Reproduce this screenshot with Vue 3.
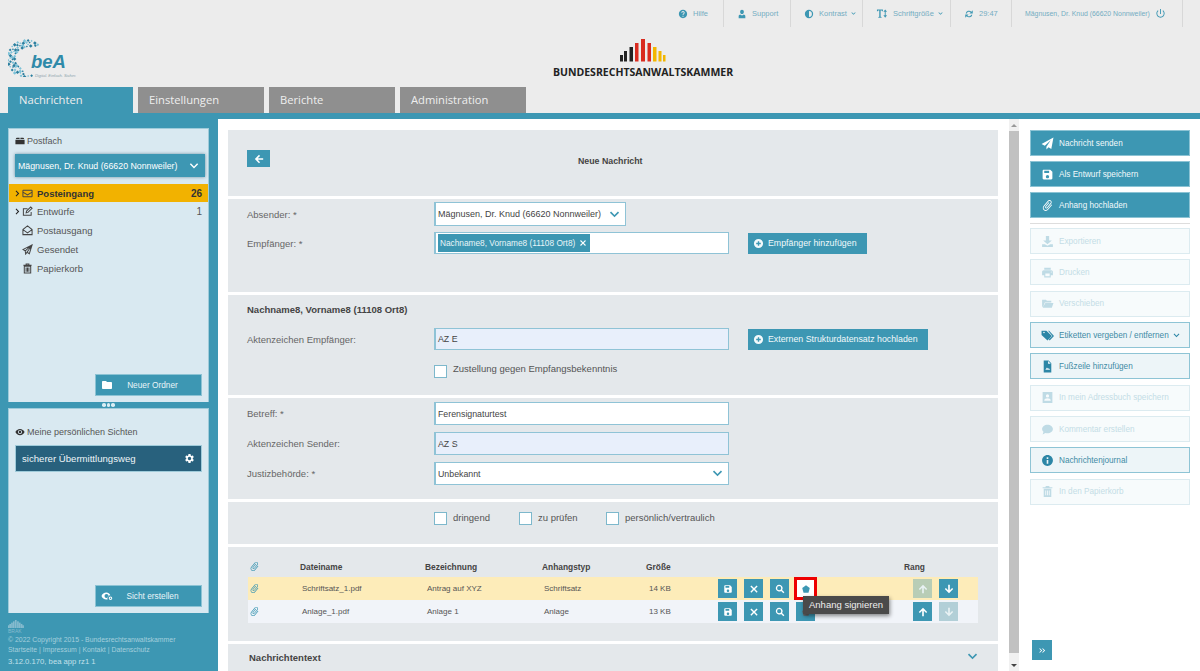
<script setup>
import { h } from 'vue'

const paths = {
  help: 'M12 2C6.48 2 2 6.48 2 12s4.48 10 10 10 10-4.48 10-10S17.52 2 12 2zm1 17h-2v-2h2v2zm2.07-7.75l-.9.92C13.45 12.9 13 13.5 13 15h-2v-.5c0-1.1.45-2.1 1.17-2.83l1.24-1.26c.37-.36.59-.86.59-1.41 0-1.1-.9-2-2-2s-2 .9-2 2H8c0-2.21 1.79-4 4-4s4 1.79 4 4c0 .88-.36 1.68-.93 2.25z',
  person: 'M12 12c2.6 0 4.5-2.2 4.5-5S14.600 2 12 2 7.500 4.200 7.500 7s1.900 5 4.500 5zM4 22v-5c0-2.500 2-3.500 4-4l2 2h4l2-2c2 .5 4 1.500 4 4v5z',
  contrast: 'M12 2a10 10 0 1 0 0 20 10 10 0 0 0 0-20zm0 17V5a7 7 0 0 1 0 14z',
  dot: 'M12 3 21 9.500 18 21H6L3 9.500z',
  refresh: 'M17.650 6.350A8 8 0 0 0 4.100 10.500h2.700a5.500 5.500 0 0 1 9.100-2.400L13 11h8V3zM6.350 17.650A8 8 0 0 0 19.900 13.500h-2.700a5.500 5.500 0 0 1-9.100 2.400L11 13H3v8z',
  power: 'M13 2h-2v11h2V2zm4.830 3.170l-1.420 1.420C17.990 7.860 19 9.810 19 12c0 3.870-3.130 7-7 7s-7-3.130-7-7c0-2.190 1.010-4.140 2.580-5.420L6.170 5.170C4.230 6.820 3 9.260 3 12c0 4.970 4.030 9 9 9s9-4.030 9-9c0-2.740-1.230-5.180-3.170-6.830z',
  send: 'M23 1 1 13l6 3 11-10-8 12v5l4-4 5 3z',
  save: 'M17 3H5c-1.110 0-2 .9-2 2v14c0 1.100.89 2 2 2h14c1.100 0 2-.9 2-2V7l-4-4zm-5 16c-1.660 0-3-1.340-3-3s1.340-3 3-3 3 1.340 3 3-1.340 3-3 3zm3-10H6V5h9v4z',
  clip: 'M16.500 6v11.500c0 2.210-1.790 4-4 4s-4-1.790-4-4V5c0-1.380 1.120-2.500 2.500-2.500s2.500 1.120 2.500 2.500v10.500c0 .55-.45 1-1 1s-1-.45-1-1V6H10v9.500c0 1.380 1.120 2.500 2.500 2.500s2.500-1.120 2.500-2.500V5c0-2.210-1.790-4-4-4S7 2.790 7 5v12.500c0 3.040 2.460 5.500 5.500 5.500s5.500-2.460 5.500-5.500V6h-1.500z',
  download: 'M9 2h6v8h5l-8 7-8-7h5zM2 17h5l5 3 5-3h5v5H2z',
  print: 'M19 8H5c-1.660 0-3 1.340-3 3v6h4v4h12v-4h4v-6c0-1.660-1.340-3-3-3zm-3 11H8v-5h8v5zm3-7c-.55 0-1-.45-1-1s.45-1 1-1 1 .45 1 1-.45 1-1 1zm-1-9H6v4h12V3z',
  folderOpen: 'M2 5h7l2 2h8v3H7l-3 8H2zM8 11h15l-3 9H3z',
  folder: 'M10 4H4c-1.100 0-1.990.9-1.990 2L2 18c0 1.100.9 2 2 2h16c1.100 0 2-.9 2-2V8c0-1.100-.9-2-2-2h-8l-2-2z',
  tags: 'M1 3h9l10 10-8 8L1 11zM5.500 5A1.500 1.500 0 1 0 5.500 8 1.500 1.500 0 0 0 5.500 5zM13 3h2l9 10-8 8-1.500-1.500L21 13z',
  fileImg: 'M5 1h9l5 5v17H5zM13 2v5h5zM8 18l3-4 2 2 1.500-1 2.500 3z',
  contact: 'M3 2h18v20H3zM12 6a3 3 0 1 0 0 6 3 3 0 0 0 0-6zM6 18h12c0-3-3-4.500-6-4.500S6 15 6 18z',
  comment: 'M12 3C6.500 3 2 6.600 2 11c0 2 1 3.900 2.600 5.300L3 21l5.200-2.500c1.200.3 2.500.5 3.800.5 5.500 0 10-3.600 10-8s-4.500-8-10-8z',
  info: 'M12 2C6.480 2 2 6.480 2 12s4.480 10 10 10 10-4.480 10-10S17.520 2 12 2zm1.500 16h-3v-7h3v7zm0-9h-3V6h3v3z',
  trash: 'M5 7h14v15H5zM8 10v9h1.500v-9zM11.250 10v9h1.500v-9zM14.500 10v9H16v-9zM3 4h5l1-2h6l1 2h5v2H3z',
  eye: 'M12 4.500C7 4.500 2.730 7.610 1 12c1.730 4.390 6 7.500 11 7.500s9.270-3.110 11-7.500c-1.730-4.390-6-7.500-11-7.500zM12 17c-2.760 0-5-2.240-5-5s2.240-5 5-5 5 2.240 5 5-2.240 5-5 5zm0-8c-1.660 0-3 1.340-3 3s1.340 3 3 3 3-1.340 3-3-1.340-3-3-3z',
  gear: 'M19.140 12.940c.04-.3.06-.61.06-.94 0-.32-.02-.64-.07-.94l2.030-1.580c.18-.14.23-.41.12-.61l-1.920-3.320c-.12-.22-.37-.29-.59-.22l-2.390.96c-.5-.38-1.030-.7-1.620-.94l-.36-2.540c-.04-.24-.24-.41-.48-.41h-3.840c-.24 0-.43.17-.47.41l-.36 2.540c-.59.24-1.130.57-1.620.94l-2.390-.96c-.22-.08-.47 0-.59.22L2.740 8.870c-.12.21-.08.47.12.61l2.030 1.580c-.05.3-.09.63-.09.94s.02.64.07.94l-2.030 1.580c-.18.14-.23.41-.12.61l1.920 3.320c.12.22.37.29.59.22l2.390-.96c.5.38 1.030.7 1.620.94l.36 2.540c.05.24.24.41.48.41h3.840c.24 0 .44-.17.47-.41l.36-2.540c.59-.24 1.130-.56 1.620-.94l2.390.96c.22.08.47 0 .59-.22l1.920-3.320c.12-.22.07-.47-.12-.61l-2.010-1.580zM12 15.600c-1.980 0-3.600-1.620-3.600-3.600s1.620-3.600 3.600-3.600 3.600 1.620 3.600 3.600-1.620 3.600-3.600 3.600z',
  search: 'M10 2a8 8 0 1 0 4.700 14.500l5.400 5.500 2.400-2.400-5.500-5.400A8 8 0 0 0 10 2zm0 3a5 5 0 1 1 0 10 5 5 0 0 1 0-10z',
  close: 'M18.300 3.300 12 9.600 5.700 3.300 3.300 5.700 9.600 12l-6.300 6.300 2.400 2.400 6.300-6.300 6.300 6.300 2.400-2.400-6.300-6.300 6.300-6.300z',
  arrowLeft: 'M22 10H9l5.500-5.500L12 2 2 12l10 10 2.500-2.500L9 14h13z',
  arrowUp: 'M10 22V9l-5.500 5.500L2 12 12 2l10 10-2.500 2.500L14 9v13z',
  arrowDown: 'M14 2v13l5.500-5.500L22 12 12 22 2 12l2.500-2.500L10 15V2z',
  down: 'M2 8l2.500-2.500L12 13l7.500-7.500L22 8 12 18z',
  right: 'M8 2l10 10L8 22l-2.500-2.500L13 12 5.500 4.500z',
  dbl: 'M3 4l8 8-8 8-2-2 6-6-6-6zM13 4l8 8-8 8-2-2 6-6-6-6z',
  textH: 'M1 3h13v4h-2l-.5-1.500H9V19l2 .5V21H4v-1.500l2-.5V5.500H3.500L3 7H1zM19 3l4 5h-3v8h3l-4 5-4-5h3V8h-3z',
  plusC: 'M12 2a10 10 0 1 0 0 20 10 10 0 0 0 0-20zm1.500 5v3.500H17v3h-3.500V17h-3v-3.500H7v-3h3.500V7z',
  mailbox: 'M2 7h9V4H4.500a2 2 0 0 0-2 2zM13 7h9l-.5-1a2 2 0 0 0-2-2H13zM1 9h22v11H1z',
  eyeGear: 'M11 5C6 5 2.500 8 1 12c1.500 4 5 7 10 7 .8 0 1.500-.1 2.200-.2a6 6 0 0 1 5.600-8.300C16.800 7 14.200 5 11 5zm0 11a4 4 0 1 1 0-8 4 4 0 0 1 0 8zM19 13a3.500 3.500 0 1 0 0 7 3.500 3.500 0 0 0 0-7zm0 2a1.500 1.500 0 1 1 0 3 1.500 1.500 0 0 1 0-3z',
}

// outline icons of the mailbox tree
const strokes = {
  envelope: 'M3 5h18a1 1 0 0 1 1 1v12a1 1 0 0 1-1 1H3a1 1 0 0 1-1-1V6a1 1 0 0 1 1-1zM2 9l10 6 10-6',
  edit: 'M20 13v7H3V6h9M9 15l1-4L19 2l3 3-9 9z',
  openMail: 'M12 2 2 10v11h20V10zM2 10l10 7 10-7',
  plane: 'M22 2 2 12l5 3 1 7 3-4 5 3zM7 15 22 2 11 18',
  bin: 'M5 7h14v15H5zM3 5h18M9 5V2h6v3M9 10v9M12 10v9M15 10v9',
}

const Ic = (props) =>
  h('svg', { viewBox: '0 0 24 24', class: 'ic' }, [
    props.line
      ? h('path', { d: strokes[props.line], fill: 'none', stroke: 'currentColor', 'stroke-width': 2.2 })
      : h('path', { d: paths[props.n], fill: 'currentColor', 'fill-rule': 'evenodd' }),
  ])
Ic.props = ['n', 'line']

const topItems = [
  { icon: 'help', text: 'Hilfe' },
  { icon: 'person', text: 'Support' },
  { icon: 'contrast', text: 'Kontrast', caret: true },
  { icon: 'textH', text: 'Schriftgröße', caret: true, wide: true },
  { icon: 'refresh', text: '29:47' },
]

const tabs = ['Nachrichten', 'Einstellungen', 'Berichte', 'Administration']

const folders = [
  { line: 'edit', text: 'Entwürfe', count: '1', arrow: true },
  { line: 'openMail', text: 'Postausgang' },
  { line: 'plane', text: 'Gesendet' },
  { line: 'bin', text: 'Papierkorb' },
]

const sideTop = [
  { n: 'send', text: 'Nachricht senden' },
  { n: 'save', text: 'Als Entwurf speichern' },
  { n: 'clip', text: 'Anhang hochladen', tilt: true },
]
const sideBottom = [
  { n: 'download', text: 'Exportieren', off: true },
  { n: 'print', text: 'Drucken', off: true },
  { n: 'folderOpen', text: 'Verschieben', off: true },
  { n: 'tags', text: 'Etiketten vergeben / entfernen', caret: true },
  { n: 'fileImg', text: 'Fußzeile hinzufügen' },
  { n: 'contact', text: 'In mein Adressbuch speichern', off: true },
  { n: 'comment', text: 'Kommentar erstellen', off: true },
  { n: 'info', text: 'Nachrichtenjournal' },
  { n: 'trash', text: 'In den Papierkorb', off: true },
]

const files = [
  { name: 'Schriftsatz_1.pdf', title: 'Antrag auf XYZ', type: 'Schriftsatz', size: '14 KB', first: true },
  { name: 'Anlage_1.pdf', title: 'Anlage 1', type: 'Anlage', size: '13 KB' },
]

// x, top, width, colour of the Kammer logo bars
const bars = [
  [0, 16, 3, '#222'], [4, 12, 3, '#222'], [9.500, 8, 3.500, '#222'],
  [15, 4, 3.500, '#d92b1f'], [21, 0, 4, '#d92b1f'], [27.500, 4, 3.500, '#d92b1f'],
  [33, 8, 3.500, '#f2b600'], [38.500, 12, 3, '#f2b600'], [43, 16, 2.500, '#f2b600'],
]

// swirl of small diamonds for the beA mark, a ring open to the right
const swirl = []
for (let ring = 0; ring < 4; ring++) {
  const from = 38 + ring * 16
  const to = 288 - ring * 16
  const steps = 22 - ring * 3
  for (let i = 0; i <= steps; i++) {
    if ((i * 7 + ring * 5) % 6 === 0) continue
    const a = ((from + ((to - from) * i) / steps) * Math.PI) / 180
    const r = 19 - ring * 2.300
    swirl.push({
      x: 19 + Math.cos(a) * r,
      y: 19 - Math.sin(a) * r,
      s: 1.500 + ((i + ring) % 3) * 0.6,
      dark: (i + ring * 2) % 2 === 0,
    })
  }
}
</script>

<template>
  <div class="page">
    <header class="head">
      <div class="topbar">
        <div v-for="t in topItems" :key="t.text" class="topitem">
          <Ic :n="t.icon" :class="{ wideic: t.wide }" />
          <span>{{ t.text }}</span>
          <Ic v-if="t.caret" n="down" class="caret" />
        </div>
        <div class="topitem user">
          <span>Mägnusen, Dr. Knud (66620 Nonnweiler)</span>
          <Ic n="power" class="power" />
        </div>
      </div>
      <div class="logos">
        <div class="bea">
          <svg viewBox="0 0 40 40" class="swirl">
            <rect
              v-for="(d, i) in swirl"
              :key="i"
              :x="d.x"
              :y="d.y"
              :width="d.s"
              :height="d.s"
              :fill="d.dark ? '#2b7f9f' : '#7cc2d8'"
              :transform="`rotate(45 ${d.x} ${d.y})`"
            />
          </svg>
          <div class="beatext">beA</div>
          <div class="beasub">Digital. Einfach. Sicher.</div>
        </div>
        <div class="brak">
          <svg width="46" height="24" viewBox="0 0 46 24">
            <rect v-for="(b, i) in bars" :key="i" :x="b[0]" :y="b[1]" :width="b[2]" :height="22.500 - b[1]" :fill="b[3]" />
          </svg>
          <div class="brakname">BUNDESRECHTSANWALTSKAMMER</div>
        </div>
      </div>
      <nav class="tabs">
        <div v-for="(t, i) in tabs" :key="t" class="tab" :class="{ on: i === 0 }">{{ t }}</div>
      </nav>
    </header>
    <div class="band"></div>

    <div class="body">
      <aside class="left">
        <div class="panel box1">
          <div class="plabel"><Ic n="mailbox" class="dark" /> Postfach</div>
          <div class="mailboxsel">
            <span>Mägnusen, Dr. Knud (66620 Nonnweiler)</span>
            <Ic n="down" />
          </div>
          <div class="frow active">
            <Ic n="right" class="tree" />
            <Ic line="envelope" class="ficon" />
            <span class="fname">Posteingang</span>
            <span class="count">26</span>
          </div>
          <div v-for="f in folders" :key="f.text" class="frow">
            <Ic v-if="f.arrow" n="right" class="tree" />
            <span v-else class="treegap"></span>
            <Ic :line="f.line" class="ficon" />
            <span class="fname">{{ f.text }}</span>
            <span class="count">{{ f.count }}</span>
          </div>
          <div class="spacer"></div>
          <div class="pbtn"><Ic n="folder" /><span>Neuer Ordner</span></div>
        </div>
        <div class="dots"><i></i><i></i><i></i></div>
        <div class="panel box2">
          <div class="plabel views"><Ic n="eye" class="dark" /> Meine persönlichen Sichten</div>
          <div class="viewitem"><span>sicherer Übermittlungsweg</span><Ic n="gear" /></div>
          <div class="spacer"></div>
          <div class="pbtn"><Ic n="eyeGear" /><span>Sicht erstellen</span></div>
        </div>
        <footer class="foot">
          <svg width="16" height="8" viewBox="0 0 16 8" class="braksm">
            <rect v-for="(b, i) in bars" :key="i" :x="b[0] * 0.33" :y="b[1] * 0.33" width="1.700" :height="8 - b[1] * 0.33" fill="#86bbce" />
          </svg>
          <div class="braktxt">BRAK</div>
          <div>© 2022 Copyright 2015 - Bundesrechtsanwaltskammer</div>
          <div class="fline">Startseite | Impressum | Kontakt | Datenschutz</div>
          <div class="fline version">3.12.0.170, bea app rz1 1</div>
        </footer>
      </aside>

      <main class="main">
        <section class="sec s1">
          <button class="back"><Ic n="arrowLeft" /></button>
          <h1>Neue Nachricht</h1>
        </section>

        <section class="sec s2">
          <div class="row r-sender">
            <label>Absender: *</label>
            <div class="field select short">
              <span>Mägnusen, Dr. Knud (66620 Nonnweiler)</span>
              <Ic n="down" />
            </div>
          </div>
          <div class="row r-rcpt">
            <label>Empfänger: *</label>
            <div class="field chipfield">
              <span class="chip">Nachname8, Vorname8 (11108 Ort8) <Ic n="close" /></span>
            </div>
            <button class="act"><Ic n="plusC" />Empfänger hinzufügen</button>
          </div>
        </section>

        <section class="sec s3">
          <h2>Nachname8, Vorname8 (11108 Ort8)</h2>
          <div class="row r-az">
            <label>Aktenzeichen Empfänger:</label>
            <div class="field tint">AZ E</div>
            <button class="act"><Ic n="plusC" />Externen Strukturdatensatz hochladen</button>
          </div>
          <div class="checks single">
            <span class="box"></span><span>Zustellung gegen Empfangsbekenntnis</span>
          </div>
        </section>

        <section class="sec s4">
          <div class="row">
            <label>Betreff: *</label>
            <div class="field">Ferensignaturtest</div>
          </div>
          <div class="row">
            <label>Aktenzeichen Sender:</label>
            <div class="field tint">AZ S</div>
          </div>
          <div class="row">
            <label>Justizbehörde: *</label>
            <div class="field select"><span>Unbekannt</span><Ic n="down" /></div>
          </div>
        </section>

        <section class="sec s5">
          <div class="checks">
            <span class="box"></span><span class="w1">dringend</span>
            <span class="box"></span><span class="w2">zu prüfen</span>
            <span class="box"></span><span>persönlich/vertraulich</span>
          </div>
        </section>

        <section class="sec s6">
          <div class="grid ghead">
            <div class="clipc"><Ic n="clip" class="clip" /></div>
            <div>Dateiname</div>
            <div>Bezeichnung</div>
            <div>Anhangstyp</div>
            <div>Größe</div>
            <div></div>
            <div class="rang">Rang</div>
          </div>
          <div v-for="f in files" :key="f.name" class="grid grow" :class="{ hl: f.first }">
            <div class="clipc"><Ic n="clip" class="clip" /></div>
            <div class="cell">{{ f.name }}</div>
            <div class="cell">{{ f.title }}</div>
            <div class="cell">{{ f.type }}</div>
            <div class="cell size">{{ f.size }}</div>
            <div class="tools">
              <button class="tb"><Ic n="save" /></button>
              <button class="tb"><Ic n="close" /></button>
              <button class="tb"><Ic n="search" /></button>
              <button class="tb sign" :class="{ focus: f.first }">
                <Ic n="dot" />
                <span v-if="f.first" class="tip">Anhang signieren</span>
              </button>
            </div>
            <div class="tools">
              <button class="tb" :class="{ dim: f.first }"><Ic n="arrowUp" /></button>
              <button class="tb" :class="{ dim: !f.first }"><Ic n="arrowDown" /></button>
            </div>
          </div>
        </section>

        <section class="sec s7">
          <h2>Nachrichtentext</h2>
          <Ic n="down" class="more" />
        </section>
      </main>

      <div class="scroll">
        <span class="sarrow up"></span>
        <div class="thumb"></div>
        <span class="sarrow dn"></span>
      </div>

      <aside class="right">
        <div class="rgroup top">
          <div v-for="b in sideTop" :key="b.text" class="rbtn solid">
            <Ic :n="b.n" :class="{ tilt: b.tilt }" /><span>{{ b.text }}</span>
          </div>
        </div>
        <div class="rule"></div>
        <div class="rgroup">
          <div v-for="b in sideBottom" :key="b.text" class="rbtn" :class="b.off ? 'off' : 'live'">
            <Ic :n="b.n" /><span>{{ b.text }}</span>
            <Ic v-if="b.caret" n="down" class="rcaret" />
          </div>
        </div>
        <div class="spacer"></div>
        <button class="collapse"><Ic n="dbl" /></button>
      </aside>
    </div>
  </div>
</template>

<style>
html, body { margin: 0; overflow: hidden; }
</style>

<style scoped>
.page {
  width: 1200px;
  height: 671px;
  overflow: hidden;
  display: flex;
  flex-direction: column;
  font-family: "Liberation Sans", Arial, sans-serif;
  color: #555;
  background: #fff;
}
.ic { width: 12px; height: 12px; flex: none; display: block; }
.spacer { flex: 1; }

.head { height: 113px; background: #ececec; display: flex; flex-direction: column; flex: none; }
.topbar {
  height: 27px;
  display: grid;
  grid-template-columns: 59px 67px 72px 88px 61px 171px;
  justify-content: end;
  padding-right: 17px;
}
.topitem {
  display: flex;
  align-items: center;
  gap: 5px;
  padding-left: 13px;
  box-sizing: border-box;
  border-right: 1px solid #d8d8d8;
  font-size: 7.500px;
  color: #74adc2;
}
.topitem .ic { width: 10px; height: 10px; color: #3d97b3; }
.topitem .wideic { width: 12px; height: 11px; }
.topitem .caret { width: 5px; height: 5px; margin-left: -1px; }
.topitem .power { width: 11px; height: 11px; }
.user { font-size: 6.900px; }

.logos { height: 60px; display: flex; }
.bea { width: 72px; margin-left: 8px; position: relative; }
.swirl { width: 38px; height: 38px; position: absolute; left: 0; top: 12px; }
.beatext {
  position: absolute;
  left: 23px;
  top: 25px;
  font: italic 700 18.500px/20px "Liberation Sans", sans-serif;
  color: #2f8aa9;
}
.beasub { position: absolute; left: 27px; top: 46px; font-size: 4px; line-height: 5px; white-space: nowrap; color: #8fa5ad; font-style: italic; }
.brak { margin-left: 473px; padding-top: 12px; display: flex; flex-direction: column; align-items: center; width: 180px; }
.brakname {
  font: 700 10.500px "Open Sans", sans-serif;
  color: #222;
  margin-top: 2px;
  white-space: nowrap;
}

.tabs { display: flex; gap: 5px; padding-left: 8px; height: 26px; }
.tab {
  width: 115px;
  padding-left: 11px;
  background: #8f8f8f;
  color: #eee;
  font: 11.200px/26px "Open Sans", sans-serif;
}
.tab.on { background: #3d97b3; width: 114px; }
.band { height: 6px; background: #3d97b3; flex: none; }

.body { flex: 1; display: flex; min-height: 0; }

.left { width: 218px; flex: none; background: #3d97b3; padding: 9px 9px 0 8px; box-sizing: border-box; display: flex; flex-direction: column; }
.panel { background: #d9e9f1; display: flex; flex-direction: column; border: 1px solid #9fcbda; border-bottom: 0; box-sizing: border-box; }
.box1 { height: 274px; }
.box2 { height: 205px; }
.plabel { display: flex; align-items: center; gap: 2px; font-size: 9px; color: #555; padding: 6px 0 0 6px; height: 11px; }
.plabel .dark { width: 10px; height: 10px; color: #333; }
.mailboxsel {
  margin: 8px 3px 7px 6px;
  height: 23px;
  background: #3d97b3;
  color: #fff;
  font-size: 8.800px;
  display: flex;
  align-items: center;
  justify-content: space-between;
  padding: 0 6px 0 3px;
  box-shadow: 0 0 3px rgba(0, 60, 90, 0.5);
}
.mailboxsel .ic { width: 10px; height: 10px; }
.frow { height: 19px; display: flex; align-items: center; font-size: 9.500px; color: #555; padding: 0 6px 0 5px; box-sizing: border-box; }
.frow.active { background: #f2b200; font-weight: 700; color: #333; height: 18px; }
.tree { width: 7px; height: 7px; color: #222; margin-right: 1px; }
.treegap { width: 8px; flex: none; }
.ficon { width: 11px; height: 11px; color: #444; margin-right: 4px; }
.fname { flex: 1; }
.count { font-size: 10px; }
.pbtn {
  margin: 0 6px 6px auto;
  width: 107px;
  height: 22px;
  background: #3d97b3;
  color: #eaf5f8;
  border: 1px solid #8cc3d4;
  box-sizing: border-box;
  font-size: 8.300px;
  display: flex;
  align-items: center;
  justify-content: center;
  padding-left: 8px;
  position: relative;
}
.pbtn .ic { position: absolute; left: 5px; top: 4px; width: 12px; height: 12px; color: #fff; }
.dots { height: 6px; display: flex; justify-content: center; align-items: center; gap: 1px; }
.dots i { width: 3.500px; height: 3.500px; border-radius: 50%; background: #dbeef4; }
.views { padding-top: 17px; height: 12px; }
.viewitem {
  margin: 7px 6px 0 6px;
  height: 27px;
  background: #28617d;
  color: #eef5f8;
  font-size: 9.600px;
  display: flex;
  align-items: center;
  justify-content: space-between;
  padding: 0 6px;
  border: 1px solid #9fcbda;
  box-sizing: border-box;
}
.viewitem .ic { width: 11px; height: 11px; color: #fff; }
.foot { font-size: 6.900px; color: #a4cfdd; padding: 7px 0 0 0; line-height: 10px; }
.braksm { display: block; }
.braktxt { font-size: 5px; line-height: 5px; margin: 1px 0 1px; color: #86bbce; }
.fline { margin-top: 0; }
.version { font-size: 7.700px; margin-top: 2px; color: #c3e0ea; }

.main { width: 791px; flex: none; box-sizing: border-box; padding: 11px 11px 0 10px; }
.sec { background: #e4e8eb; margin-bottom: 3px; padding-left: 19px; box-sizing: border-box; font-size: 9px; color: #555; }
.s1 { height: 66px; display: block; position: relative; padding-top: 20px; }
.back { width: 23px; height: 17px; background: #3d97b3; border: 0; padding: 0; color: #fff; display: flex; align-items: center; justify-content: center; }
.back .ic { width: 10px; height: 10px; }
.s1 h1 { position: absolute; left: 350px; top: 26px; margin: 0; font-size: 8.800px; color: #444; }
.row { display: flex; align-items: center; }
.row label { width: 187px; flex: none; font-size: 9.500px; color: #666; }
.field {
  width: 295px;
  height: 23px;
  box-sizing: border-box;
  background: #fff;
  border: 1px solid #8fc3d6;
  border-left-width: 2px;
  font-size: 8.800px;
  color: #444;
  display: flex;
  align-items: center;
  padding: 0 2px;
}
.field.tint { background: #e8effb; }
.select { justify-content: space-between; }
.select .ic { width: 11px; height: 11px; color: #3d97b3; margin-right: 3px; }
.short { width: 192px; height: 24px; font-size: 9px; }
.s2 { height: 93px; padding-top: 3px; }
.r-rcpt { margin-top: 6px; }
.chipfield { padding: 2px; height: 22px; }
.chip {
  background: #3d97b3;
  color: #e9f5f8;
  height: 18px;
  display: flex;
  align-items: center;
  gap: 4px;
  font-size: 8.300px;
  padding: 0 3px 0 2px;
}
.chip .ic { width: 8px; height: 8px; color: #fff; }
.act {
  margin-left: 19px;
  height: 21px;
  background: #3d97b3;
  color: #f2f9fb;
  border: 0;
  padding: 0 10px 0 5px;
  font: 8.800px "Liberation Sans", sans-serif;
  display: flex;
  align-items: center;
  gap: 4px;
}
.act .ic { width: 11px; height: 11px; }
.s3 { height: 100px; padding-top: 9px; }
.sec h2 { margin: 0; font-size: 9.500px; color: #444; line-height: 12px; }
.r-az { margin-top: 12px; }
.r-az .field { height: 22px; }
.checks { display: flex; padding-left: 187px; align-items: flex-start; font-size: 9.500px; color: #555; line-height: 11px; }
.checks .box {
  width: 13px;
  height: 13px;
  flex: none;
  background: #fff;
  border: 1px solid #7db8cc;
  box-sizing: border-box;
  margin: 2px 6px 0 0;
}
.single { margin-top: 13px; }
.s4 { height: 101px; padding-top: 4px; display: flex; flex-direction: column; gap: 7px; }
.s5 { height: 42px; padding-top: 7px; }
.s5 .checks { line-height: 17px; }
.s5 .checks .box { margin-top: 3px; }
.w1 { width: 66px; }
.w2 { width: 68px; }
.s6 { height: 94px; padding: 0 20px 0 20px; }
.grid { display: grid; grid-template-columns: 52px 125px 117px 104px 72px 195px 1fr; align-items: center; }
.ghead { height: 30px; font-size: 8.400px; font-weight: 700; color: #444; padding-top: 9px; box-sizing: border-box; }
.rang { margin-left: -9px; }
.grow { height: 23px; background: #f1f4f9; font-size: 8px; color: #555; }
.grow.hl { background: #fdecb9; }
.clipc { padding-left: 1px; }
.clip { width: 11px; height: 11px; color: #3d97b3; transform: rotate(40deg); }
.cell { padding-left: 2px; }
.size { padding-left: 3px; }
.tools { display: flex; gap: 7px; }
.tb {
  width: 19px;
  height: 19px;
  padding: 0;
  border: 0;
  background: #3d97b3;
  color: #fff;
  display: flex;
  align-items: center;
  justify-content: center;
  position: relative;
}
.tb .ic { width: 10px; height: 10px; }
.tb.dim { background: #b2cfd7; color: #e9f2f4; }
.grow.hl .tb.dim { background: #b8cdb6; }
.sign { color: #666; }
.tb.focus { background: #fff; color: #3d97b3; outline: 3px solid #e00; outline-offset: -1px; z-index: 2; }
.tip {
  position: absolute;
  left: 7px;
  top: 17px;
  background: #4a4a4a;
  color: #eee;
  font: 9.500px/18px "Liberation Sans", sans-serif;
  padding: 0 6px;
  white-space: nowrap;
  box-shadow: 1px 2px 4px rgba(0, 0, 0, 0.45);
}
.s7 { height: 40px; padding-top: 8px; position: relative; margin: 0; }
.s7 h2 { margin-left: 2px; }
.more { position: absolute; right: 20px; top: 7px; width: 11px; height: 11px; color: #3d97b3; }

.scroll { width: 10px; flex: none; display: flex; flex-direction: column; background: #f1f1f1; }
.thumb { flex: 1; background: #c1c1c1; }
.sarrow { height: 12px; flex: none; position: relative; }
.sarrow::after {
  content: '';
  position: absolute;
  left: 2px;
  top: 5px;
  border: 3px solid transparent;
}
.up::after { border-bottom-color: #999; border-top: 0; }
.sarrow.dn { height: 18px; }
.dn::after { border-top-color: #444; border-bottom: 0; top: 11px; }

.right { flex: 1; box-sizing: border-box; padding: 11px 10px 11px 11px; display: flex; flex-direction: column; }
.rgroup { display: flex; flex-direction: column; gap: 5.350px; }
.rgroup.top { gap: 5px; }
.rbtn {
  height: 26px;
  box-sizing: border-box;
  display: flex;
  align-items: center;
  font-size: 8.200px;
  padding-left: 10px;
  border: 1px solid transparent;
  flex: none;
}
.rbtn > .ic { width: 13px; height: 13px; margin-right: 5px; }
.solid { background: #3d97b3; border-color: #8cc3d4; color: #f2f9fb; }
.solid .ic { color: #fff; }
.tilt { transform: rotate(40deg); }
.off { background: #f7fbfc; border-color: #dcebf0; color: #c4dde6; }
.off .ic { color: #bfdbe5; }
.live { background: #edf5f8; border-color: #8ec4d5; color: #3f8ba5; }
.live .ic { color: #2c86a6; }
.rbtn > .rcaret { width: 7px; height: 7px; margin: 0 0 0 4px; }
.rule { height: 1px; background: #ddd; margin: 5px 0 4px; flex: none; }
.collapse { width: 20px; height: 20px; padding: 0; border: 0; margin-left: 2px; background: #3d97b3; color: #fff; display: flex; align-items: center; justify-content: center; flex: none; }
.collapse .ic { width: 7px; height: 7px; }
</style>
